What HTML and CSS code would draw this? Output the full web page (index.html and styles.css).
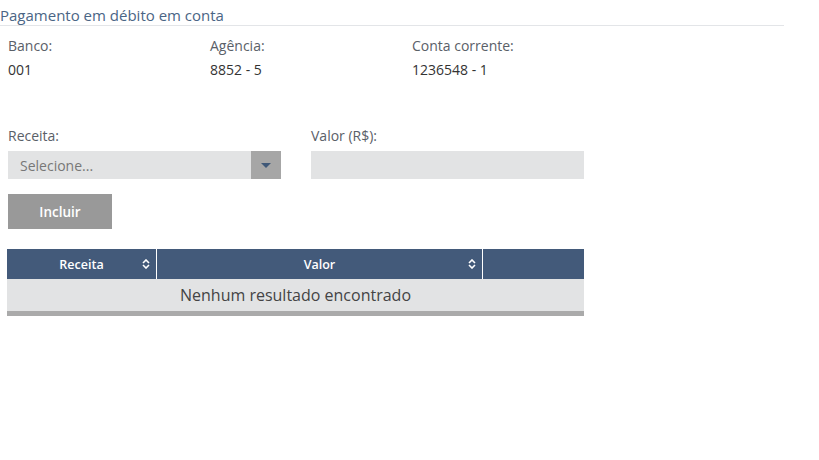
FILE: index.html
```html
<!DOCTYPE html>
<html lang="pt">
<head>
<meta charset="utf-8">
<link rel="stylesheet" href="styles.css">
</head>
<body>
<div class="page">
  <h2 class="title">Pagamento em débito em conta</h2>
  <div class="info">
    <div class="info-col">
      <div class="label">Banco:</div>
      <div class="value">001</div>
    </div>
    <div class="info-col">
      <div class="label">Agência:</div>
      <div class="value">8852 - 5</div>
    </div>
    <div class="info-col">
      <div class="label">Conta corrente:</div>
      <div class="value">1236548 - 1</div>
    </div>
  </div>
  <div class="form">
    <div class="field">
      <div class="label">Receita:</div>
      <div class="select">
        <span class="select-text">Selecione...</span>
        <span class="select-btn"><span class="caret"></span></span>
      </div>
    </div>
    <div class="field">
      <div class="label">Valor (R$):</div>
      <div class="input"></div>
    </div>
  </div>
  <button class="btn">Incluir</button>
  <table class="grid">
    <thead>
      <tr>
        <th class="c1"><span>Receita</span><svg class="sort" width="8" height="10" viewBox="0 0 8 10"><path d="M1 4 L4 1 L7 4 M1 6 L4 9 L7 6" fill="none" stroke="#fff" stroke-width="1.6"/></svg></th>
        <th class="c2"><span>Valor</span><svg class="sort" width="8" height="10" viewBox="0 0 8 10"><path d="M1 4 L4 1 L7 4 M1 6 L4 9 L7 6" fill="none" stroke="#fff" stroke-width="1.6"/></svg></th>
        <th class="c3"></th>
      </tr>
    </thead>
    <tbody>
      <tr><td colspan="3" class="empty">Nenhum resultado encontrado</td></tr>
    </tbody>
  </table>
</div>
</body>
</html>
```
FILE: styles.css
```css
* { box-sizing: border-box; }
html, body { margin: 0; padding: 0; background: #fff; }
body { font-family: "Open Sans", "Noto Sans", sans-serif; color: #555; }
.page { width: 784px; }
.title {
  margin: 0;
  font-size: 15px;
  font-weight: 400;
  color: #4a6585;
  line-height: 20px;
  padding-top: 5px;
  border-bottom: 1px solid #e3e5e8;
  height: 26px;
}
.info { display: flex; padding: 11px 0 0 8px; }
.info-col { width: 202px; }
.label { font-size: 14px; line-height: 18px; color: #5a6068; }
.info .value { font-size: 14px; line-height: 18px; color: #333; margin-top: 6px; }
.form { display: flex; gap: 30px; padding-left: 8px; margin-top: 48px; }
.field .label { margin-bottom: 6px; }
.select {
  width: 273px; height: 28px; background: #e2e3e4;
  display: flex; align-items: center; justify-content: space-between;
}
.select-text { font-size: 14px; color: #777; padding-left: 12px; }
.select-btn {
  width: 30px; height: 28px; background: #a6a6a6;
  display: flex; align-items: center; justify-content: center;
}
.caret {
  width: 0; height: 0;
  border-left: 5px solid transparent; border-right: 5px solid transparent;
  border-top: 5px solid #3f5878;
}
.input { width: 273px; height: 28px; background: #e2e3e4; }
.btn {
  display: block; margin: 15px 0 0 8px;
  width: 104px; height: 35px; border: 0; background: #999;
  color: #fff; font-family: "Open Sans", sans-serif; font-weight: 600; font-size: 13.5px;
  padding: 0;
}
.grid {
  margin: 20px 0 0 7px; width: 577px;
  border-collapse: separate; border-spacing: 0;
}
.grid th {
  height: 30px; background: #435a7a; color: #fff;
  font-size: 12.5px; font-weight: 600; padding: 0; position: relative;
  border-right: 1px solid #fff;
}
.grid th.c3 { border-right: 0; }
.c1 { width: 150px; }
.c2 { width: 326px; }
.sort { position: absolute; right: 6px; top: 10px; }
.empty {
  height: 37px; background: #e2e3e4; text-align: center;
  font-size: 16px; color: #444; padding: 0 0 1px;
  border-bottom: 5px solid #aaa;
}
```
